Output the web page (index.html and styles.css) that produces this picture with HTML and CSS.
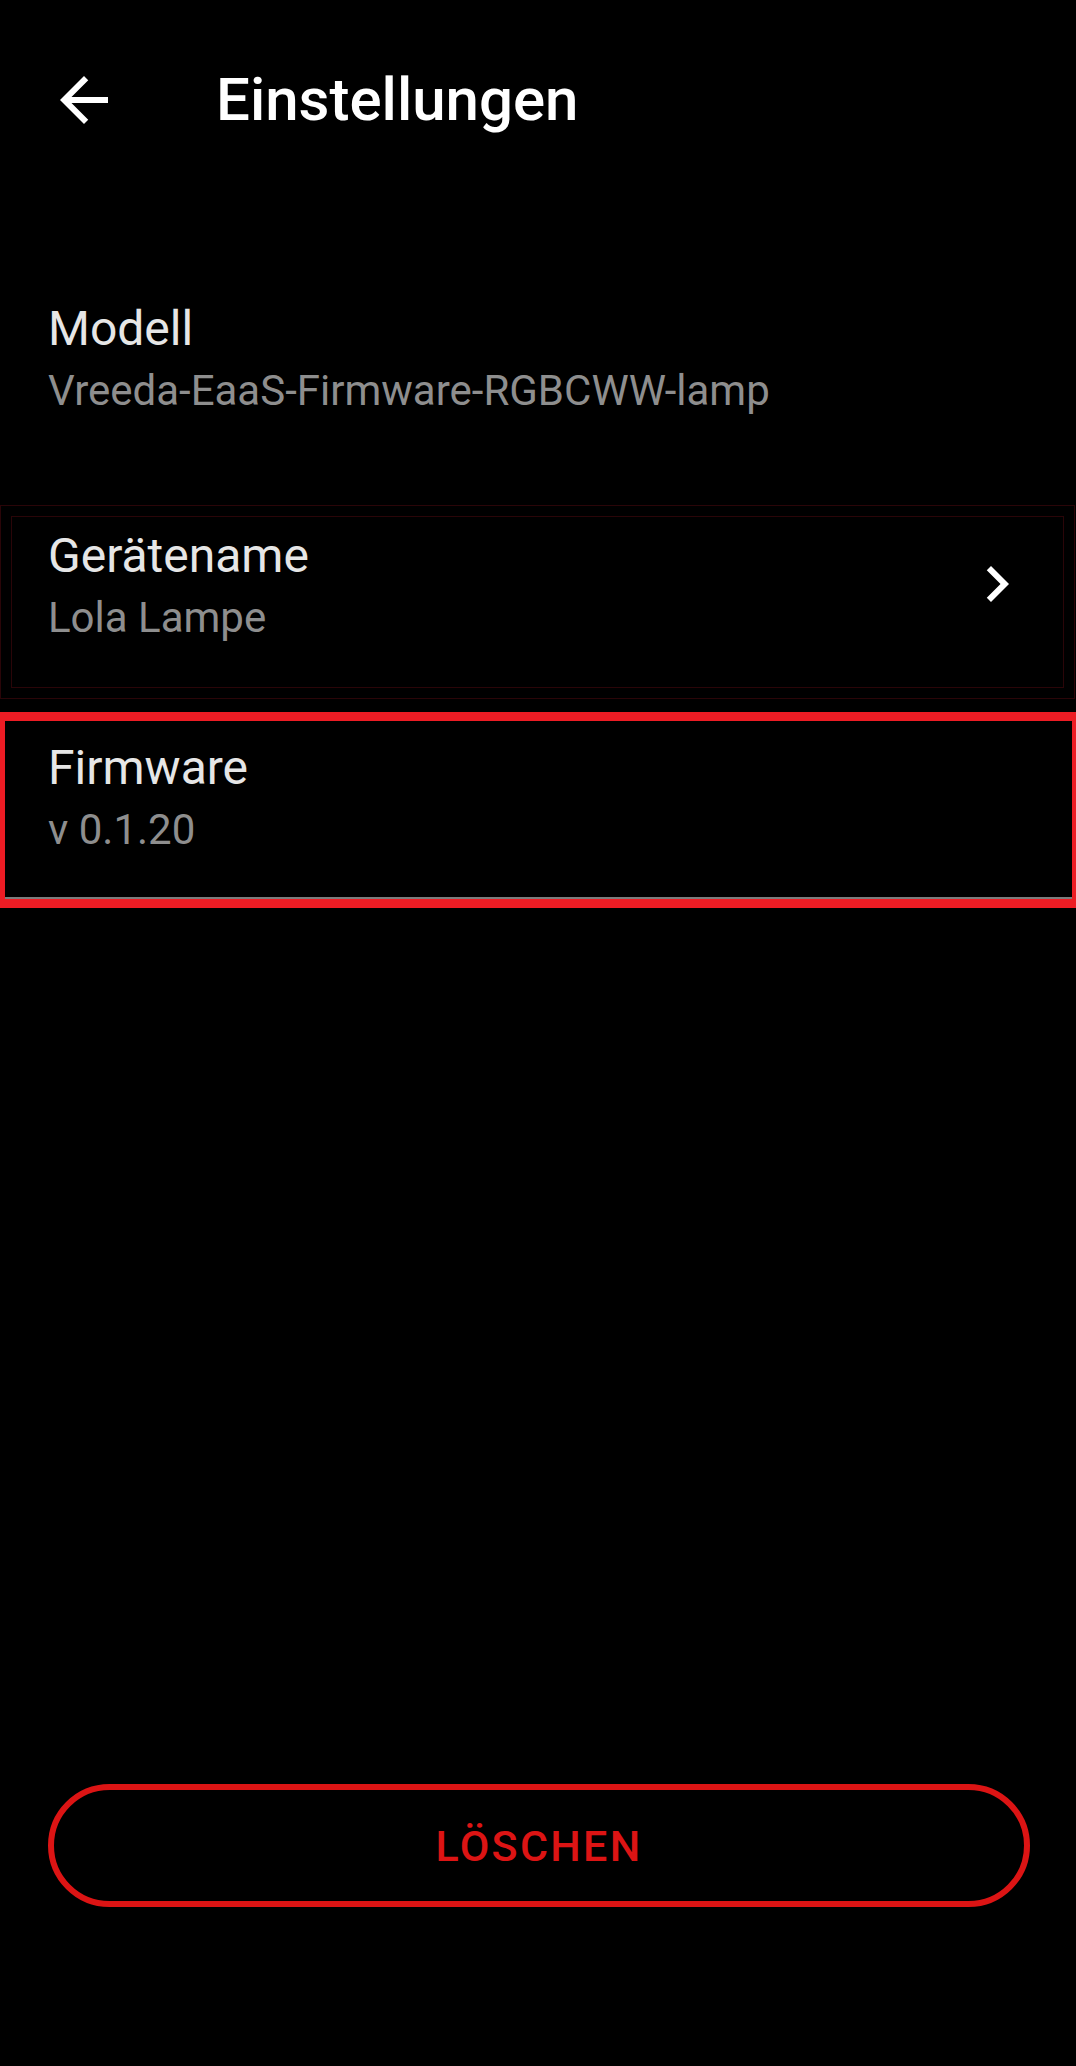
FILE: index.html
```html
<!DOCTYPE html>
<html lang="de">

<head>
    <meta charset="UTF-8">
    <meta name="viewport" content="width=device-width, initial-scale=1.0">
    <title>Einstellungen</title>
    <link rel="stylesheet" href="styles.css">
</head>

<body>
    <div class="page">
        <!-- Toolbar -->
        <header class="toolbar">
            <button class="icon-btn" type="button" aria-label="Zurück">
                <svg viewBox="0 0 24 24" width="72" height="72">
                    <path d="M20 11H7.83l5.59-5.59L12 4l-8 8 8 8 1.41-1.41L7.83 13H20v-2z" fill="#fff" />
                </svg>
            </button>
            <h1 class="toolbar-title">Einstellungen</h1>
        </header>

        <!-- Einstellungen Liste -->
        <div class="list">
            <div class="item model">
                <div class="item-text">
                    <div class="item-title">Modell</div>
                    <div class="item-sub">Vreeda-EaaS-Firmware-RGBCWW-lamp</div>
                </div>
            </div>

            <div class="item-frame">
                <div class="item name">
                    <div class="item-text">
                        <div class="item-title">Gerätename</div>
                        <div class="item-sub">Lola Lampe</div>
                    </div>
                    <svg class="chevron" viewBox="0 0 24 24" width="72" height="72">
                        <path d="M10 6L8.59 7.41 13.17 12l-4.58 4.59L10 18l6-6z" fill="#fff" />
                    </svg>
                </div>
            </div>

            <div class="highlight">
                <div class="item firmware">
                    <div class="item-text">
                        <div class="item-title">Firmware</div>
                        <div class="item-sub">v 0.1.20</div>
                    </div>
                </div>
            </div>
        </div>

        <div class="actions">
            <button class="delete-btn" type="button">LÖSCHEN</button>
        </div>
    </div>
</body>

</html>
```

FILE: styles.css
```css
/* Grundlayout */
body {
    margin: 0;
    padding: 0;
    background: #000;
    color: #fff;
    font-family: Roboto, 'Liberation Sans', Arial, sans-serif;
}

.page {
    display: flex;
    flex-direction: column;
    min-height: 2066px;
}

/* Toolbar */
.toolbar {
    display: flex;
    align-items: center;
    height: 200px;
}

.icon-btn {
    display: flex;
    width: 72px;
    height: 72px;
    margin-left: 48px;
    padding: 0;
    border: none;
    background: none;
}

.toolbar-title {
    margin: 0 0 0 96px;
    font-size: 60px;
    font-weight: 500;
    line-height: 72px;
    color: #fff;
}

/* Listeneinträge */
.item {
    display: flex;
    align-items: center;
    justify-content: space-between;
}

.item-title,
.item-sub {
    white-space: nowrap;
}

.item-title {
    font-size: 48px;
    line-height: 60px;
    color: #e6e6e6;
}

.item-sub {
    font-size: 42px;
    line-height: 64px;
    color: #8e8e8e;
}

.model {
    padding: 99px 48px 82px;
}

.item-frame {
    border: 1px solid #2a0508;
    padding: 10px 10px;
    margin-right: 1px;
}

.name {
    border: 1px solid #2a0508;
    padding: 9px 30px 37px 36px;
}

.chevron {
    margin-bottom: 8px;
}

.highlight {
    margin-top: 13px;
    border: 9px solid #ed1c24;
    border-left-width: 5px;
    border-right-width: 4px;
}

.firmware {
    padding: 17px 43px 35px;
    border-bottom: 2px solid #7c7c7c;
}

/* Löschen Button */
.actions {
    margin-top: auto;
    padding: 0 46px 159px 48px;
}

.delete-btn {
    display: block;
    width: 100%;
    height: 123px;
    border: 6px solid #dc1414;
    border-radius: 62px;
    background: #000;
    color: #dc1414;
    font-family: Roboto, 'Liberation Sans', Arial, sans-serif;
    font-size: 43px;
    font-weight: 500;
    letter-spacing: 2.3px;
    cursor: pointer;
}
```
